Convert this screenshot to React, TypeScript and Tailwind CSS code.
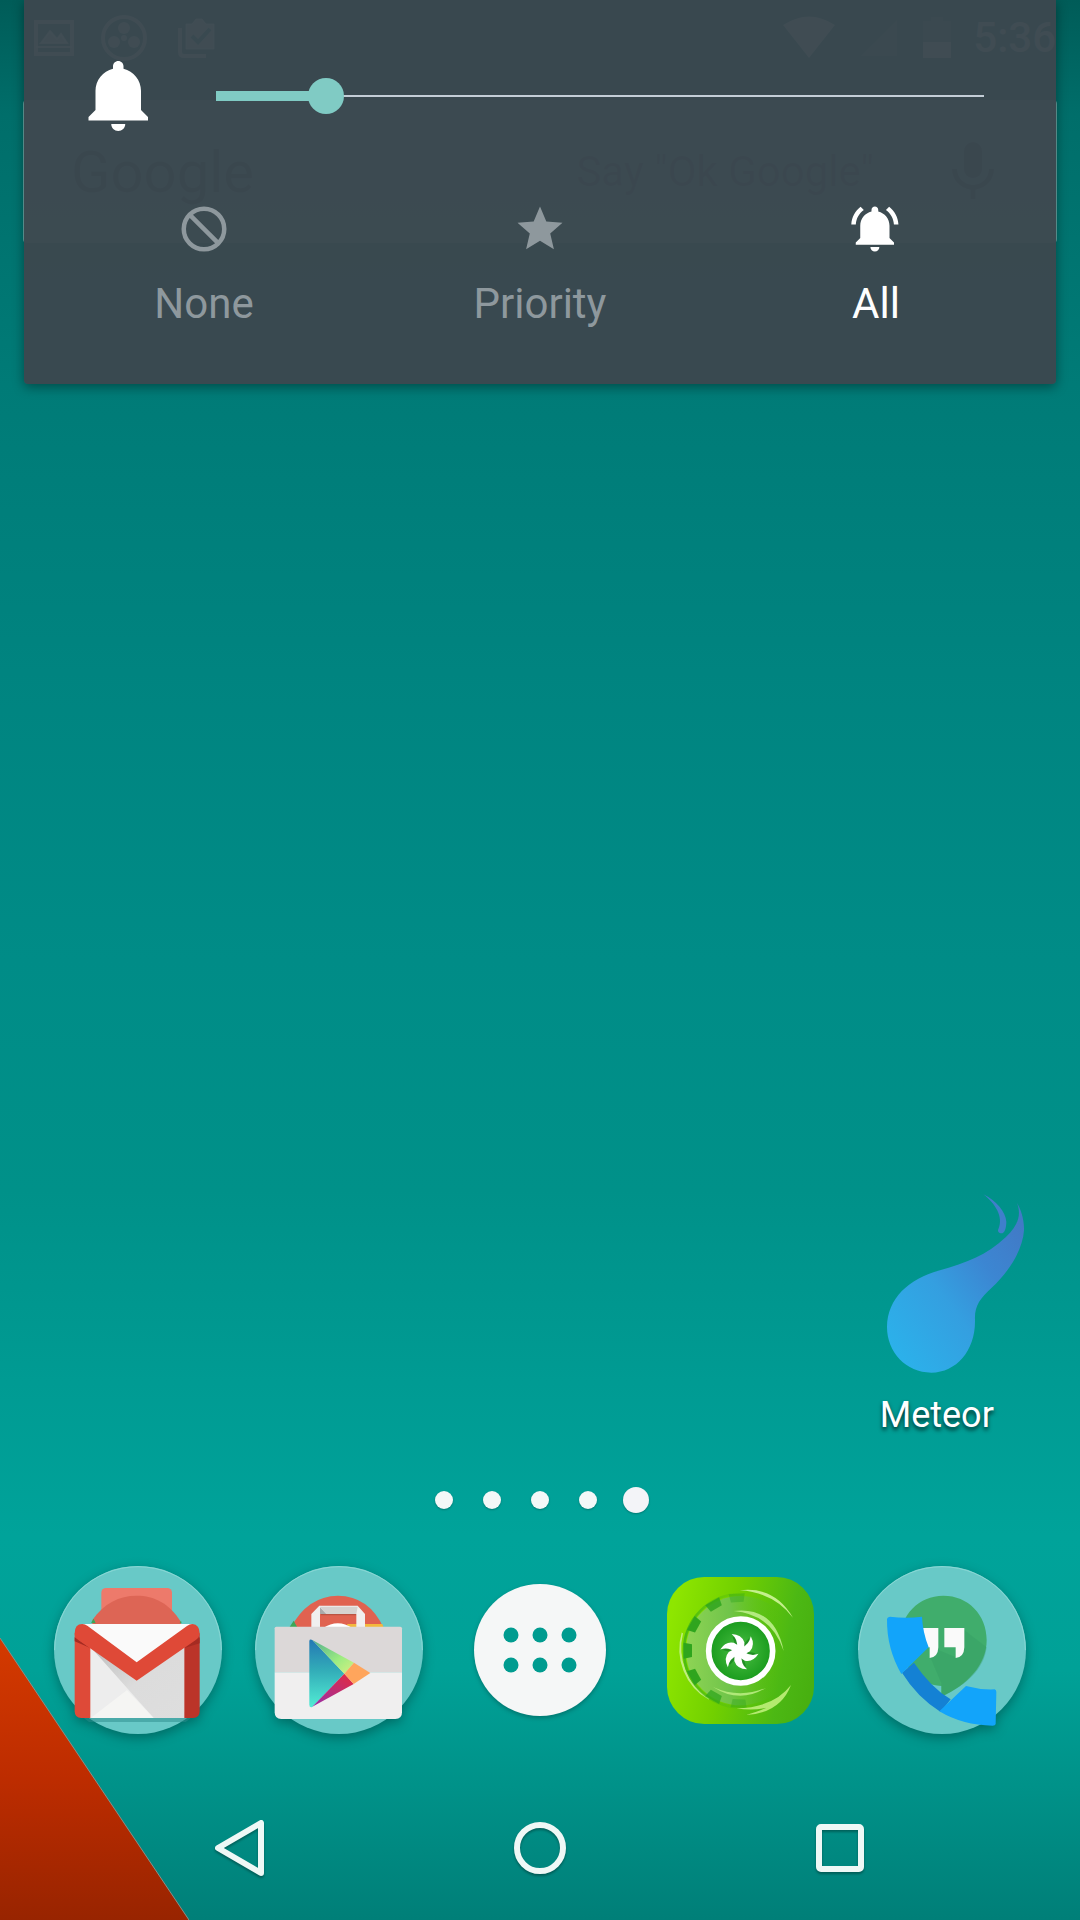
import React from "react";

const BELL =
  "M11.5 22c1.1 0 2-.9 2-2h-4c0 1.1.9 2 2 2zm6.5-6v-5.5c0-3.07-2.13-5.64-5-6.32V3.5c0-.83-.67-1.5-1.5-1.5S10 2.67 10 3.5v.68c-2.87.68-5 3.25-5 6.32V16l-2 2v1h17v-1l-2-2z";

function StatusBar() {
  return (
    <header className="flex h-[75px] items-center justify-between pr-6 pl-8 text-white/80">
      <div className="flex items-center gap-6">
        <svg className="h-11 w-11" viewBox="0 0 44 44" fill="none" stroke="currentColor" strokeWidth="4">
          <rect x="4" y="6" width="36" height="32" />
          <path d="M4 31h36M9 27l9-12 7 8 4-5 6 9z" fill="currentColor" strokeWidth="2" />
        </svg>
        <svg className="h-12 w-12" viewBox="0 0 48 48" fill="currentColor">
          <circle cx="24" cy="24" r="21" fill="none" stroke="currentColor" strokeWidth="4" />
          <circle cx="24" cy="14" r="6" />
          <circle cx="14" cy="28" r="6" />
          <circle cx="34" cy="28" r="6" />
          <circle cx="24" cy="24" r="3" />
        </svg>
        <svg className="h-12 w-12" viewBox="0 0 48 48" fill="none" stroke="currentColor">
          <path d="M8 14v24q0 4 4 4h22" strokeWidth="4" />
          <path d="M14 10h6l4-5h6l4 5h8v25H14z" fill="currentColor" />
          <path d="M20 22l6 6 12-13" stroke="#047874" strokeWidth="4" />
        </svg>
      </div>
      <div className="flex items-center gap-5">
        <svg className="h-11 w-14" viewBox="0 0 56 44" fill="currentColor">
          <path d="M28 42L2 9Q28-8 54 9z" />
        </svg>
        <svg className="h-11 w-11 opacity-30" viewBox="0 0 44 44" fill="currentColor">
          <path d="M4 40L40 4v36z" />
        </svg>
        <svg className="h-11 w-8" viewBox="0 0 32 44" fill="currentColor">
          <path d="M2 26h28v16H2z" />
          <path d="M2 5h8V1h12v4h8v21H2z" opacity=".3" />
        </svg>
        <time className="text-[42px] leading-none font-medium">5:36</time>
      </div>
    </header>
  );
}

function SearchBar() {
  return (
    <div className="mx-[23px] mt-[25px] flex h-[143px] items-center justify-between rounded-sm bg-white/40 pr-[57px] pl-12 text-gray-700">
      <span className="text-[58px] leading-none">Google</span>
      <div className="flex items-center gap-[72px]">
        <span className="text-[42px] leading-none text-gray-600">Say &quot;Ok Google&quot;</span>
        <button type="button" aria-label="Voice search" className="block">
          <svg className="h-[72px] w-[54px]" viewBox="3 0 18 24" fill="currentColor">
            <path d="M12 14c1.700 0 3-1.300 3-3V5a3 3 0 0 0-6 0v6c0 1.700 1.300 3 3 3zm5.300-3a5.300 5.300 0 0 1-10.600 0H5a7 7 0 0 0 6.200 6.900V21h1.600v-3.100A7 7 0 0 0 19 11z" />
          </svg>
        </button>
      </div>
    </div>
  );
}

function ModeIcon({ name }: { name: string }) {
  if (name === "None") {
    return (
      <svg className="h-[54px] w-[54px]" viewBox="0 0 24 24" fill="none" stroke="currentColor" strokeWidth="2">
        <circle cx="12" cy="12" r="9" />
        <path d="M5.600 5.600l12.800 12.800" />
      </svg>
    );
  }
  if (name === "Priority") {
    return (
      <svg className="h-[54px] w-[54px]" viewBox="0 0 24 24" fill="currentColor">
        <path d="M12 17.270L18.180 21l-1.640-7.030L22 9.240l-7.190-.610L12 2 9.190 8.630 2 9.240l5.460 4.730L5.820 21z" />
      </svg>
    );
  }
  return (
    <svg className="h-[54px] w-[54px]" viewBox="0 0 24 24" fill="currentColor">
      <path d={BELL} />
      <path d="M6.580 3.580L5.150 2.150C2.760 3.970 1.180 6.800 1.030 10h2c.15-2.650 1.510-4.970 3.550-6.420zM19.970 10h2c-.15-3.200-1.730-6.030-4.130-7.850l-1.430 1.430c2.050 1.450 3.410 3.770 3.560 6.420z" />
    </svg>
  );
}

function VolumePanel() {
  return (
    <section
      aria-label="Volume"
      className="absolute inset-x-6 top-0 rounded-b-sm bg-[#3b474e]/97 pb-[52px] shadow-[0_3px_12px_rgba(0,0,0,0.4)]"
    >
      <div className="flex h-48 items-center gap-[54px] pr-[72px] pl-[54px]">
        <svg className="h-[84px] w-[84px] shrink-0 text-white" viewBox="0 0 24 24" fill="currentColor">
          <path d={BELL} />
        </svg>
        <input
          type="range"
          aria-label="Ring volume"
          min={0}
          max={8}
          defaultValue={1}
          className="block h-9 min-w-0 flex-1 appearance-none bg-transparent [&::-webkit-slider-runnable-track]:h-[10px] [&::-webkit-slider-runnable-track]:bg-[linear-gradient(#80cbc4,#80cbc4),linear-gradient(#c3cdd6,#c3cdd6)] [&::-webkit-slider-runnable-track]:bg-[length:14%_10px,100%_2px] [&::-webkit-slider-runnable-track]:bg-[position:left_center,left_center] [&::-webkit-slider-runnable-track]:bg-no-repeat [&::-webkit-slider-thumb]:-mt-[13px] [&::-webkit-slider-thumb]:h-9 [&::-webkit-slider-thumb]:w-9 [&::-webkit-slider-thumb]:appearance-none [&::-webkit-slider-thumb]:rounded-full [&::-webkit-slider-thumb]:bg-[#80cbc4]"
        />
      </div>
      <div className="grid grid-cols-3 px-3 pt-[10px]">
        {["None", "Priority", "All"].map((name) => (
          <button
            key={name}
            type="button"
            aria-pressed={name === "All"}
            className="flex flex-col items-center gap-5 text-[#8e989d] aria-pressed:text-white"
          >
            <ModeIcon name={name} />
            <span className="text-[42px] leading-[56px]">{name}</span>
          </button>
        ))}
      </div>
    </section>
  );
}

function MeteorIcon() {
  return (
    <svg className="h-[186px] w-48" viewBox="3 60 576 558">
      <defs>
        <linearGradient id="meteor" x1="0.1" y1="0.9" x2="0.95" y2="0.1">
          <stop offset="0" stopColor="#2cb0ea" />
          <stop offset="0.4" stopColor="#349fe0" />
          <stop offset="0.7" stopColor="#3c86d2" />
          <stop offset="1" stopColor="#417ac6" />
        </linearGradient>
      </defs>
      <path
        fill="url(#meteor)"
        d="M531 96C541 112 553 143 552 178C549 235 506 304 455 350C420 382 403 405 405 446C407 538 350 604 274 605C198 604 141 544 141 468C143 382 205 324 300 298C378 276 440 253 497 199C534 164 545 132 531 96Z"
      />
      <path fill="#3f7fcb" d="M430 70C468 89 497 122 499 152C499 171 494 187 484 187C474 187 472 179 476 172C490 139 467 98 430 70Z" />
    </svg>
  );
}

function GmailIcon() {
  return (
    <svg className="h-[168px] w-[168px] drop-shadow-[0_4px_6px_rgba(0,0,0,0.3)]" viewBox="75 48 504 504">
      <defs>
        <linearGradient id="fold" x1="0" y1="0" x2="1" y2="1">
          <stop offset="0" stopColor="#bdbdbd" />
          <stop offset="0.5" stopColor="#dcdcdc" />
          <stop offset="1" stopColor="#dedede" />
        </linearGradient>
      </defs>
      <circle cx="327" cy="300" r="252" fill="#68c9c7" />
      <path d="M77 300a250 250 0 0 1 500 0" fill="none" stroke="#8ad8d5" strokeWidth="3" />
      <rect x="217" y="114" width="212" height="130" rx="14" fill="#ed7a6b" />
      <path d="M190 210C225 160 270 137 323 137S421 160 456 216V236H190z" fill="#dd6555" />
      <path d="M186 218l8-12 6 14zM452 218l4-6 2 8z" fill="#3aa757" />
      <path d="M160 500H490L470 516H180z" fill="#2c8c8c" opacity=".5" />
      <rect x="160" y="222" width="330" height="282" fill="#ededed" />
      <path d="M184 290L323 392L466 290V504H374z" fill="url(#fold)" />
      <path d="M190 500L294 420L374 504H190z" fill="#f5f5f3" />
      <path d="M165 222H485L323 340z" fill="#fafafa" />
      <path d="M137 250H184V504H157Q137 504 137 484z" fill="#de4a38" />
      <path d="M466 250H512V484Q512 504 492 504H466z" fill="#bb3429" />
      <path d="M137 262L184 294L137 274zM512 262L466 294L512 280z" fill="#a52b22" />
      <path
        d="M137 250Q137 222 160 222Q168 222 176 228L323 337L474 228Q482 222 490 222Q512 224 512 250Q511 262 500 270L323 392L148 270Q137 262 137 250z"
        fill="#df4937"
      />
    </svg>
  );
}

function PlayIcon() {
  return (
    <svg className="h-[168px] w-[168px] drop-shadow-[0_4px_6px_rgba(0,0,0,0.3)]" viewBox="48 48 504 504">
      <defs>
        <linearGradient id="playBlue" x1="0" y1="0" x2="0" y2="1">
          <stop offset="0" stopColor="#2478b4" />
          <stop offset="0.45" stopColor="#32acb8" />
          <stop offset="1" stopColor="#52ecd4" />
        </linearGradient>
        <linearGradient id="playGreen" x1="0" y1="0" x2="1" y2="1">
          <stop offset="0" stopColor="#52ae8c" />
          <stop offset="0.6" stopColor="#9cec82" />
          <stop offset="1" stopColor="#d8f080" />
        </linearGradient>
        <linearGradient id="playRed" x1="1" y1="0" x2="0" y2="1">
          <stop offset="0" stopColor="#e52a3c" />
          <stop offset="1" stopColor="#9630ac" />
        </linearGradient>
      </defs>
      <circle cx="300" cy="300" r="252" fill="#68c9c7" />
      <path d="M50 300a250 250 0 0 1 500 0" fill="none" stroke="#8ad8d5" strokeWidth="3" />
      <path d="M155 234Q205 138 297 137Q390 138 434 234z" fill="#e06250" />
      <path d="M150 234L164 212L176 234z" fill="#3aa757" />
      <path d="M325 222H430L434 234H325z" fill="#f3b93c" />
      <path d="M252 234Q297 206 340 234z" fill="#fff" />
      <path d="M246 186H352V196H246z" fill="#a04a38" opacity=".6" />
      <path d="M217 232V192L241 167H356L378 192V232H352V192H243V232z" fill="#f0efef" />
      <path d="M243 170H356L352 192H262z" fill="#d6d2d0" />
      <path d="M243 172L262 192H243z" fill="#aaa" />
      <path d="M107 235Q107 230 112 230H484Q489 230 489 235V367H107z" fill="#dcd8d8" />
      <path d="M107 367H489V487Q489 507 469 507H127Q107 507 107 487z" fill="#f0efef" />
      <path d="M211 273Q212 266 220 270L316 371L220 471Q211 474 211 464z" fill="url(#playBlue)" />
      <path d="M220 270L345 338L316 371z" fill="url(#playGreen)" />
      <path d="M316 371L344 402L220 470z" fill="url(#playRed)" />
      <path d="M345 338L394 369L344 402L316 371z" fill="#ffa55c" />
    </svg>
  );
}

function AppsIcon() {
  return (
    <svg className="h-[132px] w-[132px] drop-shadow-[0_2px_2px_rgba(0,0,0,0.25)]" viewBox="0 0 132 132">
      <circle cx="66" cy="66" r="66" fill="#f5f7f7" />
      <g fill="#009c90">
        {[37, 66, 95].map((x) => (
          <React.Fragment key={x}>
            <circle cx={x} cy="51" r="7.500" />
            <circle cx={x} cy="81" r="7.500" />
          </React.Fragment>
        ))}
      </g>
    </svg>
  );
}

const teeth = [
  { angle: 92, fade: 0.4 },
  { angle: 120, fade: 0.75 },
  { angle: 151, fade: 1 },
  { angle: 180, fade: 1 },
  { angle: 209, fade: 1 },
  { angle: 240, fade: 0.85 },
  { angle: 266, fade: 0.4 },
];

const blades = [0, 60, 120, 180, 240, 300];

function GreenifyIcon() {
  return (
    <svg className="h-[147px] w-[147px]" viewBox="52 48 441 441">
      <defs>
        <linearGradient id="leaf" x1="0" y1="0.4" x2="1" y2="0.6">
          <stop offset="0" stopColor="#8ee600" />
          <stop offset="0.4" stopColor="#72d000" />
          <stop offset="0.8" stopColor="#4cb814" />
          <stop offset="1" stopColor="#48b010" />
        </linearGradient>
        <linearGradient id="gear" x1="0" y1="0" x2="1" y2="0">
          <stop offset="0" stopColor="#8ed455" />
          <stop offset="0.4" stopColor="#70c44a" />
          <stop offset="0.85" stopColor="#4cb81a" stopOpacity="0" />
        </linearGradient>
        <linearGradient id="gearEdge" x1="0" y1="0" x2="1" y2="0">
          <stop offset="0" stopColor="#4cbc10" />
          <stop offset="0.55" stopColor="#4cb810" stopOpacity="0" />
        </linearGradient>
        <radialGradient id="hub">
          <stop offset="0" stopColor="#4cc044" />
          <stop offset="1" stopColor="#189a1c" />
        </radialGradient>
      </defs>
      <rect x="52" y="48" width="441" height="441" rx="112" fill="url(#leaf)" />
      <path d="M98 216A182 182 0 0 0 178 414A172 172 0 0 1 98 216z" fill="#d4f4a0" stroke="#c0ee80" strokeWidth="4" />
      <circle cx="273" cy="269" r="164" fill="url(#gear)" />
      <circle cx="273" cy="269" r="170" fill="none" stroke="url(#gearEdge)" strokeWidth="8" />
      <g fill="#2fa51e">
        {teeth.map(({ angle, fade }) => (
          <path key={angle} d="M419 250L444 245V293L419 288z" opacity={fade} transform={`rotate(${angle} 273 269)`} />
        ))}
      </g>
      <path d="M270 88Q375 75 430 170Q372 94 270 88z" fill="#c4f08c" />
      <path d="M252 150Q375 135 402 270Q366 160 252 150z" fill="#b4ea80" />
      <path d="M190 378Q270 414 350 380Q270 430 190 378z" fill="#b0e878" />
      <path d="M260 442Q372 440 424 372Q392 456 290 462Q330 450 350 440Q310 450 260 442z" fill="#b4ea70" />
      <circle cx="273" cy="270" r="96" fill="url(#hub)" stroke="#fff" strokeWidth="17" />
      <g fill="#12781a" opacity=".6">
        {blades.map((angle) => (
          <path key={angle} d="M276 262Q284 244 298 232Q304 248 290 268z" transform={`rotate(${angle} 269 272)`} />
        ))}
      </g>
      <circle cx="269" cy="272" r="17" fill="#fff" />
      <g fill="#fff">
        {blades.map((angle) => (
          <path key={angle} d="M262 262Q266 236 246 219Q276 220 284 244Q286 258 280 272z" transform={`rotate(${angle} 269 272)`} />
        ))}
      </g>
    </svg>
  );
}

function DialerIcon() {
  return (
    <svg className="h-[168px] w-[168px] drop-shadow-[0_4px_6px_rgba(0,0,0,0.3)]" viewBox="56 48 504 504">
      <circle cx="308" cy="300" r="252" fill="#68c9c7" />
      <path d="M58 300a250 250 0 0 1 500 0" fill="none" stroke="#8ad8d5" strokeWidth="3" />
      <path d="M312 137C386 137 442 194 442 270C442 345 384 405 306 440V408C236 404 184 350 182 270C182 196 238 137 312 137z" fill="#40ad6c" />
      <path d="M375 240L442 292C434 356 384 405 306 440V400L272 320L297 300L350 322z" fill="#359c60" opacity=".35" />
      <path d="M238 234H297V292Q296 322 271 324V292H238zM315 234H375V292Q374 322 349 324V292H315z" fill="#fafafa" />
      <path d="M188 368L224 338Q274 412 334 448L304 486Q232 440 188 368z" fill="#1481d4" />
      <path d="M143 207Q144 201 152 200Q200 206 248 200Q250 246 268 292L186 372Q142 296 143 207z" fill="#12a4fa" />
      <path d="M300 484L380 408Q424 420 466 418Q471 420 471 426L469 522Q468 527 460 527Q370 526 300 484z" fill="#12a4fa" />
    </svg>
  );
}

const dock = [
  { name: "Gmail", Icon: GmailIcon },
  { name: "Play Store", Icon: PlayIcon },
  { name: "Apps", Icon: AppsIcon },
  { name: "Greenify", Icon: GreenifyIcon },
  { name: "Phone", Icon: DialerIcon },
];

function NavBar() {
  return (
    <nav className="mt-[42px] grid h-36 grid-cols-3 place-items-center px-[90px] text-[#eef8f6]">
      <button type="button" aria-label="Back">
        <svg className="block h-[60px] w-[60px] drop-shadow-[0_2px_1px_rgba(0,0,0,0.3)]" viewBox="0 0 60 60" fill="none" stroke="currentColor" strokeWidth="6" strokeLinejoin="round">
          <path d="M8 30L51 5V55z" />
        </svg>
      </button>
      <button type="button" aria-label="Home">
        <svg className="block h-[60px] w-[60px] drop-shadow-[0_2px_1px_rgba(0,0,0,0.3)]" viewBox="0 0 60 60" fill="none" stroke="currentColor" strokeWidth="6">
          <circle cx="30" cy="30" r="23" />
        </svg>
      </button>
      <button type="button" aria-label="Recent apps">
        <svg className="block h-[60px] w-[60px] drop-shadow-[0_2px_1px_rgba(0,0,0,0.3)]" viewBox="0 0 60 60" fill="none" stroke="currentColor" strokeWidth="6">
          <rect x="9" y="9" width="42" height="42" rx="2" />
        </svg>
      </button>
    </nav>
  );
}

export default function App() {
  return (
    <div className="relative isolate flex min-h-screen flex-col overflow-hidden bg-[linear-gradient(to_bottom,#005c58_0%,#006e6a_6%,#007b77_20%,#008480_35%,#008c87_50%,#009189_62%,#009b93_72%,#00a39a_80%,#00a197_87%,#009289_93%,#007f78_100%)] font-['Roboto',sans-serif]">
      <svg className="absolute bottom-0 left-0 -z-10 h-[282px] w-[189px]" viewBox="0 0 189 282" aria-hidden="true">
        <defs>
          <linearGradient id="wedge" x1="0" y1="0" x2="0" y2="1">
            <stop offset="0" stopColor="#d43a00" />
            <stop offset="0.5" stopColor="#bd2c00" />
            <stop offset="1" stopColor="#982400" />
          </linearGradient>
        </defs>
        <path d="M0 0L189 282H0z" fill="url(#wedge)" />
        <path d="M0 0L189 282" stroke="#8a8f88" strokeWidth="1" />
      </svg>

      <StatusBar />
      <SearchBar />

      <main className="flex flex-1 flex-col justify-end">
        <div className="grid grid-cols-5 px-11">
          <button type="button" className="col-start-5 flex flex-col items-center gap-4">
            <MeteorIcon />
            <span className="text-[36px] leading-[44px] text-white [text-shadow:0_3px_4px_rgba(0,0,0,0.7)]">Meteor</span>
          </button>
        </div>

        <div className="mt-[33px] flex h-[60px] items-center justify-center" aria-hidden="true">
          {[0, 1, 2, 3].map((page) => (
            <span key={page} className="flex w-12 justify-center">
              <span className="h-[18px] w-[18px] rounded-full bg-[#f3f8f8] shadow-[0_1px_2px_rgba(0,0,0,0.25)]" />
            </span>
          ))}
          <span className="flex w-12 justify-center">
            <span className="h-[26px] w-[26px] rounded-full bg-[#f3f4f8] shadow-[0_1px_2px_rgba(0,0,0,0.25)]" />
          </span>
        </div>

        <div className="mt-9 grid h-[168px] grid-cols-5 place-items-center px-[38px]">
          {dock.map(({ name, Icon }) => (
            <button key={name} type="button" aria-label={name}>
              <Icon />
            </button>
          ))}
        </div>
      </main>

      <NavBar />
      <VolumePanel />
    </div>
  );
}
